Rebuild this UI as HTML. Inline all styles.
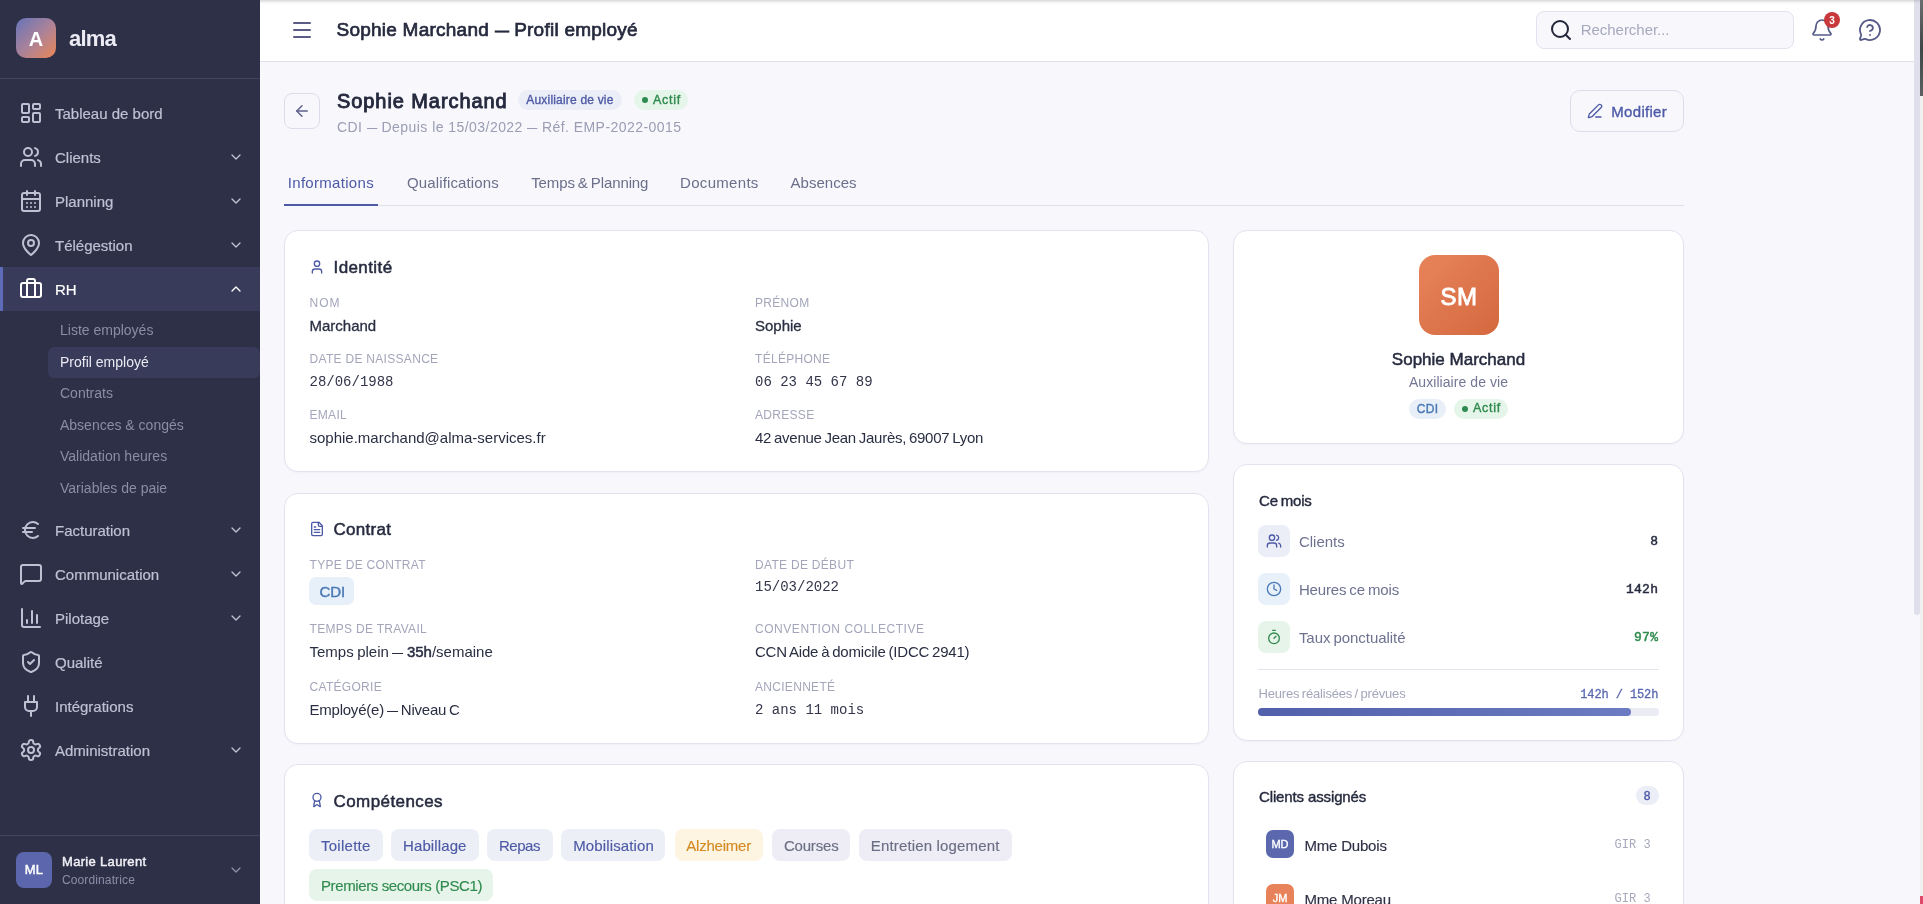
<!DOCTYPE html>
<html lang="fr">
<head>
<meta charset="utf-8">
<title>Sophie Marchand — Profil employé</title>
<style>
*{box-sizing:border-box;margin:0;padding:0}
html,body{width:1923px;height:904px;overflow:hidden}
body{font-family:"Liberation Sans",sans-serif;background:#f7f7fc;color:#262a3e;position:relative}
.a{position:absolute;display:block}
.t{position:absolute;white-space:nowrap}
.d{display:inline-block;overflow:visible}
.d>span{display:inline-block;transform:scaleX(0.74);transform-origin:0 50%}
</style>
</head>
<body>
<div id="root" style="position:absolute;left:0;top:0;width:1923px;height:904px;overflow:hidden;will-change:transform">
<div class="a" style="left:0px;top:0px;width:260px;height:904px;background:#2e3048"></div>
<div class="a" style="left:16px;top:18px;width:40px;height:40px;border-radius:10px;background:linear-gradient(135deg,#6673b8 0%,#a9829a 50%,#ec8656 100%)"></div>
<div class="t" style="left:16.0px;width:40px;text-align:center;top:29.07px;font-size:20px;line-height:20px;color:#ffffff;font-weight:bold;">A</div>
<div class="t" style="left:69px;top:28.38px;font-size:22px;line-height:22px;color:#ecebf4;font-weight:bold;letter-spacing:-0.8px;">alma</div>
<div class="a" style="left:0px;top:78px;width:260px;height:1px;background:#42455d"></div>
<svg class="a" style="left:19px;top:101px;width:24px;height:24px;" viewBox="0 0 24 24" fill="none" stroke="#bfc1d3" stroke-width="2" stroke-linecap="round" stroke-linejoin="round"><rect x="3" y="3" width="7" height="9" rx="1"/><rect x="14" y="3" width="7" height="5" rx="1"/><rect x="14" y="12" width="7" height="9" rx="1"/><rect x="3" y="16" width="7" height="5" rx="1"/></svg>
<div class="t" style="left:55px;top:106.30px;font-size:15px;line-height:15px;color:#bfc1d3;-webkit-text-stroke:0.2px #bfc1d3;">Tableau de bord</div>
<svg class="a" style="left:19px;top:145px;width:24px;height:24px;" viewBox="0 0 24 24" fill="none" stroke="#bfc1d3" stroke-width="2" stroke-linecap="round" stroke-linejoin="round"><path d="M16 21v-2a4 4 0 0 0-4-4H6a4 4 0 0 0-4 4v2"/><circle cx="9" cy="7" r="4"/><path d="M22 21v-2a4 4 0 0 0-3-3.87"/><path d="M16 3.13a4 4 0 0 1 0 7.75"/></svg>
<div class="t" style="left:55px;top:150.30px;font-size:15px;line-height:15px;color:#bfc1d3;-webkit-text-stroke:0.2px #bfc1d3;">Clients</div>
<svg class="a" style="left:228px;top:149px;width:16px;height:16px;" viewBox="0 0 24 24" fill="none" stroke="#bfc1d3" stroke-width="2" stroke-linecap="round" stroke-linejoin="round"><path d="m6 9 6 6 6-6"/></svg>
<svg class="a" style="left:19px;top:189px;width:24px;height:24px;" viewBox="0 0 24 24" fill="none" stroke="#bfc1d3" stroke-width="2" stroke-linecap="round" stroke-linejoin="round"><rect x="3" y="4" width="18" height="18" rx="2"/><path d="M16 2v4M8 2v4M3 10h18M8 14h.01M12 14h.01M16 14h.01M8 18h.01M12 18h.01M16 18h.01"/></svg>
<div class="t" style="left:55px;top:194.30px;font-size:15px;line-height:15px;color:#bfc1d3;-webkit-text-stroke:0.2px #bfc1d3;">Planning</div>
<svg class="a" style="left:228px;top:193px;width:16px;height:16px;" viewBox="0 0 24 24" fill="none" stroke="#bfc1d3" stroke-width="2" stroke-linecap="round" stroke-linejoin="round"><path d="m6 9 6 6 6-6"/></svg>
<svg class="a" style="left:19px;top:233px;width:24px;height:24px;" viewBox="0 0 24 24" fill="none" stroke="#bfc1d3" stroke-width="2" stroke-linecap="round" stroke-linejoin="round"><path d="M20 10c0 6-8 12-8 12s-8-6-8-12a8 8 0 0 1 16 0Z"/><circle cx="12" cy="10" r="3"/></svg>
<div class="t" style="left:55px;top:238.30px;font-size:15px;line-height:15px;color:#bfc1d3;-webkit-text-stroke:0.2px #bfc1d3;">Télégestion</div>
<svg class="a" style="left:228px;top:237px;width:16px;height:16px;" viewBox="0 0 24 24" fill="none" stroke="#bfc1d3" stroke-width="2" stroke-linecap="round" stroke-linejoin="round"><path d="m6 9 6 6 6-6"/></svg>
<div class="a" style="left:0px;top:267px;width:260px;height:44px;background:#383b5a"></div>
<div class="a" style="left:0px;top:267px;width:3px;height:44px;background:#5d6bb8"></div>
<svg class="a" style="left:19px;top:277px;width:24px;height:24px;" viewBox="0 0 24 24" fill="none" stroke="#ffffff" stroke-width="2" stroke-linecap="round" stroke-linejoin="round"><path d="M16 20V4a2 2 0 0 0-2-2h-4a2 2 0 0 0-2 2v16"/><rect x="2" y="6" width="20" height="14" rx="2"/></svg>
<div class="t" style="left:55px;top:282.30px;font-size:15px;line-height:15px;color:#ffffff;-webkit-text-stroke:0.2px #ffffff;">RH</div>
<svg class="a" style="left:228px;top:281px;width:16px;height:16px;" viewBox="0 0 24 24" fill="none" stroke="#ffffff" stroke-width="2" stroke-linecap="round" stroke-linejoin="round"><path d="m18 15-6-6-6 6"/></svg>
<div class="t" style="left:60px;top:323.35px;font-size:14px;line-height:14px;color:#8a8da6;">Liste employés</div>
<div class="a" style="left:48px;top:346.5px;width:212px;height:31.5px;background:#383b5a;border-radius:6px"></div>
<div class="t" style="left:60px;top:354.85px;font-size:14px;line-height:14px;color:#ebeaf3;">Profil employé</div>
<div class="t" style="left:60px;top:386.35px;font-size:14px;line-height:14px;color:#8a8da6;">Contrats</div>
<div class="t" style="left:60px;top:417.85px;font-size:14px;line-height:14px;color:#8a8da6;">Absences &amp; congés</div>
<div class="t" style="left:60px;top:449.35px;font-size:14px;line-height:14px;color:#8a8da6;">Validation heures</div>
<div class="t" style="left:60px;top:480.85px;font-size:14px;line-height:14px;color:#8a8da6;">Variables de paie</div>
<svg class="a" style="left:19px;top:518px;width:24px;height:24px;" viewBox="0 0 24 24" fill="none" stroke="#bfc1d3" stroke-width="2" stroke-linecap="round" stroke-linejoin="round"><path d="M4 10h12M4 14h9M19 6a7.7 7.7 0 0 0-5.2-2A7.9 7.9 0 0 0 6 12c0 4.4 3.5 8 7.8 8 2 0 3.8-.8 5.2-2"/></svg>
<div class="t" style="left:55px;top:523.30px;font-size:15px;line-height:15px;color:#bfc1d3;-webkit-text-stroke:0.2px #bfc1d3;">Facturation</div>
<svg class="a" style="left:228px;top:522px;width:16px;height:16px;" viewBox="0 0 24 24" fill="none" stroke="#bfc1d3" stroke-width="2" stroke-linecap="round" stroke-linejoin="round"><path d="m6 9 6 6 6-6"/></svg>
<svg class="a" style="left:19px;top:562px;width:24px;height:24px;" viewBox="0 0 24 24" fill="none" stroke="#bfc1d3" stroke-width="2" stroke-linecap="round" stroke-linejoin="round"><path d="M22 17a2 2 0 0 1-2 2H6.828a2 2 0 0 0-1.414.586l-2.202 2.202A.71.71 0 0 1 2 21.286V5a2 2 0 0 1 2-2h16a2 2 0 0 1 2 2z"/></svg>
<div class="t" style="left:55px;top:567.30px;font-size:15px;line-height:15px;color:#bfc1d3;-webkit-text-stroke:0.2px #bfc1d3;">Communication</div>
<svg class="a" style="left:228px;top:566px;width:16px;height:16px;" viewBox="0 0 24 24" fill="none" stroke="#bfc1d3" stroke-width="2" stroke-linecap="round" stroke-linejoin="round"><path d="m6 9 6 6 6-6"/></svg>
<svg class="a" style="left:19px;top:606px;width:24px;height:24px;" viewBox="0 0 24 24" fill="none" stroke="#bfc1d3" stroke-width="2" stroke-linecap="round" stroke-linejoin="round"><path d="M3 3v16a2 2 0 0 0 2 2h16"/><path d="M18 17V9M13 17V5M8 17v-3"/></svg>
<div class="t" style="left:55px;top:611.30px;font-size:15px;line-height:15px;color:#bfc1d3;-webkit-text-stroke:0.2px #bfc1d3;">Pilotage</div>
<svg class="a" style="left:228px;top:610px;width:16px;height:16px;" viewBox="0 0 24 24" fill="none" stroke="#bfc1d3" stroke-width="2" stroke-linecap="round" stroke-linejoin="round"><path d="m6 9 6 6 6-6"/></svg>
<svg class="a" style="left:19px;top:650px;width:24px;height:24px;" viewBox="0 0 24 24" fill="none" stroke="#bfc1d3" stroke-width="2" stroke-linecap="round" stroke-linejoin="round"><path d="M20 13c0 5-3.5 7.5-7.66 8.95a1 1 0 0 1-.67-.01C7.5 20.5 4 18 4 13V6a1 1 0 0 1 1-1c2 0 4.5-1.2 6.24-2.72a1.17 1.17 0 0 1 1.52 0C14.51 3.81 17 5 19 5a1 1 0 0 1 1 1z"/><path d="m9 12 2 2 4-4"/></svg>
<div class="t" style="left:55px;top:655.30px;font-size:15px;line-height:15px;color:#bfc1d3;-webkit-text-stroke:0.2px #bfc1d3;">Qualité</div>
<svg class="a" style="left:19px;top:694px;width:24px;height:24px;" viewBox="0 0 24 24" fill="none" stroke="#bfc1d3" stroke-width="2" stroke-linecap="round" stroke-linejoin="round"><path d="M12 22v-5M9 8V2M15 8V2M18 8v5a4 4 0 0 1-4 4h-4a4 4 0 0 1-4-4V8Z"/></svg>
<div class="t" style="left:55px;top:699.30px;font-size:15px;line-height:15px;color:#bfc1d3;-webkit-text-stroke:0.2px #bfc1d3;">Intégrations</div>
<svg class="a" style="left:19px;top:738px;width:24px;height:24px;" viewBox="0 0 24 24" fill="none" stroke="#bfc1d3" stroke-width="2" stroke-linecap="round" stroke-linejoin="round"><path d="M12.22 2h-.44a2 2 0 0 0-2 2v.18a2 2 0 0 1-1 1.73l-.43.25a2 2 0 0 1-2 0l-.15-.08a2 2 0 0 0-2.73.73l-.22.38a2 2 0 0 0 .73 2.73l.15.1a2 2 0 0 1 1 1.72v.51a2 2 0 0 1-1 1.74l-.15.09a2 2 0 0 0-.73 2.73l.22.38a2 2 0 0 0 2.73.73l.15-.08a2 2 0 0 1 2 0l.43.25a2 2 0 0 1 1 1.73V20a2 2 0 0 0 2 2h.44a2 2 0 0 0 2-2v-.18a2 2 0 0 1 1-1.73l.43-.25a2 2 0 0 1 2 0l.15.08a2 2 0 0 0 2.73-.73l.22-.39a2 2 0 0 0-.73-2.73l-.15-.08a2 2 0 0 1-1-1.74v-.5a2 2 0 0 1 1-1.74l.15-.09a2 2 0 0 0 .73-2.73l-.22-.38a2 2 0 0 0-2.73-.73l-.15.08a2 2 0 0 1-2 0l-.43-.25a2 2 0 0 1-1-1.73V4a2 2 0 0 0-2-2z"/><circle cx="12" cy="12" r="3"/></svg>
<div class="t" style="left:55px;top:743.30px;font-size:15px;line-height:15px;color:#bfc1d3;-webkit-text-stroke:0.2px #bfc1d3;">Administration</div>
<svg class="a" style="left:228px;top:742px;width:16px;height:16px;" viewBox="0 0 24 24" fill="none" stroke="#bfc1d3" stroke-width="2" stroke-linecap="round" stroke-linejoin="round"><path d="m6 9 6 6 6-6"/></svg>
<div class="a" style="left:0px;top:835px;width:260px;height:1px;background:#42455d"></div>
<div class="a" style="left:16px;top:852px;width:36px;height:36px;border-radius:8px;background:#5b66ac"></div>
<div class="t" style="left:16.0px;width:36px;text-align:center;top:863.20px;font-size:13px;line-height:13px;color:#ffffff;-webkit-text-stroke:0.45px #ffffff;letter-spacing:0.2px;">ML</div>
<div class="t" style="left:62px;top:855.00px;font-size:13px;line-height:13px;color:#f0eff6;-webkit-text-stroke:0.45px #f0eff6;letter-spacing:0.32px;">Marie Laurent</div>
<div class="t" style="left:62px;top:873.84px;font-size:12px;line-height:12px;color:#8a8ea8;letter-spacing:0.12px;">Coordinatrice</div>
<svg class="a" style="left:228px;top:862px;width:16px;height:16px;" viewBox="0 0 24 24" fill="none" stroke="#8a8ea8" stroke-width="2" stroke-linecap="round" stroke-linejoin="round"><path d="m6 9 6 6 6-6"/></svg>
<div class="a" style="left:260px;top:0px;width:1654px;height:62px;background:#ffffff;border-bottom:1px solid #e1e1ed"></div>
<div class="a" style="left:260px;top:0px;width:1660px;height:5px;background:linear-gradient(rgba(150,152,160,0.38),rgba(200,200,205,0.08) 60%,rgba(255,255,255,0))"></div>
<div class="a" style="left:293px;top:22px;width:18px;height:2px;background:#5a5c85;border-radius:1px"></div>
<div class="a" style="left:293px;top:29px;width:18px;height:2px;background:#5a5c85;border-radius:1px"></div>
<div class="a" style="left:293px;top:36px;width:18px;height:2px;background:#5a5c85;border-radius:1px"></div>
<div class="t" style="left:336.5px;top:20.42px;font-size:19px;line-height:19px;color:#262a3e;-webkit-text-stroke:0.7px #262a3e;letter-spacing:0.24px;">Sophie Marchand <span class="d" style="width:14.06px"><span>—</span></span> Profil employé</div>
<div class="a" style="left:1536px;top:11px;width:258px;height:38px;border-radius:8px;background:#f7f7fc;border:1px solid #e3e2ef"></div>
<svg class="a" style="left:1549px;top:18px;width:24px;height:24px;" viewBox="0 0 24 24" fill="none" stroke="#23263a" stroke-width="2" stroke-linecap="round" stroke-linejoin="round"><circle cx="11" cy="11" r="8"/><path d="m21 21-4.3-4.3"/></svg>
<div class="t" style="left:1580.7px;top:22.30px;font-size:15px;line-height:15px;color:#a6a9bd;letter-spacing:-0.03px;">Rechercher...</div>
<svg class="a" style="left:1810px;top:18px;width:24px;height:24px;" viewBox="0 0 24 24" fill="none" stroke="#565a86" stroke-width="1.7" stroke-linecap="round" stroke-linejoin="round"><path d="M10.268 21a2 2 0 0 0 3.464 0"/><path d="M3.262 15.326A1 1 0 0 0 4 17h16a1 1 0 0 0 .74-1.673C19.41 13.956 18 12.499 18 8A6 6 0 0 0 6 8c0 4.499-1.411 5.956-2.738 7.326"/></svg>
<div class="a" style="left:1824px;top:12px;width:16px;height:16px;border-radius:50%;background:#c8393c"></div>
<div class="t" style="left:1824.0px;width:16px;text-align:center;top:15.54px;font-size:10px;line-height:10px;color:#ffffff;font-weight:bold;">3</div>
<svg class="a" style="left:1858px;top:18px;width:24px;height:24px;" viewBox="0 0 24 24" fill="none" stroke="#565a86" stroke-width="1.8" stroke-linecap="round" stroke-linejoin="round"><path d="M2.992 16.342a2 2 0 0 1 .094 1.167l-1.065 3.29a1 1 0 0 0 1.236 1.168l3.413-.998a2 2 0 0 1 1.099.092 10 10 0 1 0-4.777-4.719"/><path d="M9.09 9a3 3 0 0 1 5.83 1c0 2-3 3-3 3"/><path d="M12 17h.01"/></svg>
<div class="a" style="left:1914px;top:0px;width:6px;height:615px;background:#e0dfec;border-radius:0 0 3px 3px"></div>
<div class="a" style="left:1920px;top:0px;width:3px;height:96px;background:linear-gradient(#6b6e6e,#3f4648 50%,#59605f)"></div>
<div class="a" style="left:1920px;top:96px;width:3px;height:800px;background:#f1f1f1"></div>
<div class="a" style="left:1920px;top:896px;width:3px;height:8px;background:#e04a6a"></div>
<div class="a" style="left:1914px;top:0px;width:6px;height:5px;background:linear-gradient(rgba(150,152,160,0.38),rgba(200,200,205,0.08) 60%,rgba(255,255,255,0))"></div>
<div class="a" style="left:284px;top:93px;width:36px;height:36px;border-radius:8px;border:1px solid #dcdcea"></div>
<svg class="a" style="left:293px;top:102px;width:18px;height:18px;" viewBox="0 0 24 24" fill="none" stroke="#5b5f8a" stroke-width="1.9" stroke-linecap="round" stroke-linejoin="round"><path d="m12 19-7-7 7-7"/><path d="M19 12H5"/></svg>
<div class="t" style="left:337px;top:90.77px;font-size:20px;line-height:20px;color:#262a3e;-webkit-text-stroke:0.9px #262a3e;letter-spacing:0.92px;">Sophie Marchand</div>
<div class="a" style="left:518px;top:90px;width:104px;height:20px;border-radius:10px;background:#eceef7"></div>
<div class="t" style="left:526.3px;top:93.94px;font-size:12px;line-height:12px;color:#4d5aa6;-webkit-text-stroke:0.35px #4d5aa6;letter-spacing:0.19px;">Auxiliaire de vie</div>
<div class="a" style="left:634px;top:90px;width:54px;height:20px;border-radius:10px;background:#e6f5e9"></div>
<div class="a" style="left:642px;top:97px;width:6px;height:6px;border-radius:50%;background:#2e8a4e"></div>
<div class="t" style="left:653px;top:93.52px;font-size:12.5px;line-height:12.5px;color:#2e8a4e;-webkit-text-stroke:0.4px #2e8a4e;letter-spacing:0.75px;">Actif</div>
<div class="t" style="left:337px;top:120.05px;font-size:14px;line-height:14px;color:#9a9db3;letter-spacing:0.45px;">CDI <span class="d" style="width:10.36px"><span>—</span></span> Depuis le 15/03/2022 <span class="d" style="width:10.36px"><span>—</span></span> Réf. EMP-2022-0015</div>
<div class="a" style="left:1570px;top:90px;width:114px;height:42px;border-radius:10px;border:1px solid #dedcec"></div>
<svg class="a" style="left:1587px;top:103px;width:16px;height:16px;" viewBox="0 0 24 24" fill="none" stroke="#4d5aa6" stroke-width="2" stroke-linecap="round" stroke-linejoin="round"><path d="M13 21h8"/><path d="M21.174 6.812a1 1 0 0 0-3.986-3.987L3.842 16.174a2 2 0 0 0-.5.83l-1.321 4.352a.5.5 0 0 0 .623.622l4.353-1.32a2 2 0 0 0 .83-.497z"/></svg>
<div class="t" style="left:1611.3px;top:104.30px;font-size:15px;line-height:15px;color:#4d5aa6;-webkit-text-stroke:0.35px #4d5aa6;letter-spacing:0.3px;">Modifier</div>
<div class="a" style="left:284px;top:205px;width:1400px;height:1px;background:#dfe0ec"></div>
<div class="a" style="left:284px;top:204px;width:94px;height:2px;background:#4d5aa6"></div>
<div class="t" style="left:287.8px;top:175.10px;font-size:15px;line-height:15px;color:#4d5aa6;letter-spacing:0.3px;">Informations</div>
<div class="t" style="left:407px;top:175.10px;font-size:15px;line-height:15px;color:#6b6f8a;letter-spacing:0.13px;">Qualifications</div>
<div class="t" style="left:531.2px;top:175.10px;font-size:15px;line-height:15px;color:#6b6f8a;letter-spacing:-0.11px;word-spacing:-1px;">Temps &amp; Planning</div>
<div class="t" style="left:680.1px;top:175.10px;font-size:15px;line-height:15px;color:#6b6f8a;letter-spacing:0.3px;">Documents</div>
<div class="t" style="left:790.6px;top:175.10px;font-size:15px;line-height:15px;color:#6b6f8a;">Absences</div>
<div class="a" style="left:284px;top:230px;width:925px;height:242px;background:#ffffff;border:1px solid #e3e2ef;border-radius:14px;box-shadow:0 1px 2px rgba(40,40,90,0.04)"></div>
<svg class="a" style="left:309px;top:259px;width:16px;height:16px;" viewBox="0 0 24 24" fill="none" stroke="#4d5aa6" stroke-width="2" stroke-linecap="round" stroke-linejoin="round"><path d="M19 21v-2a4 4 0 0 0-4-4H9a4 4 0 0 0-4 4v2"/><circle cx="12" cy="7" r="4"/></svg>
<div class="t" style="left:333.5px;top:258.61px;font-size:17px;line-height:17px;color:#262a3e;-webkit-text-stroke:0.5px #262a3e;letter-spacing:0.41px;">Identité</div>
<div class="t" style="left:309.5px;top:296.84px;font-size:12px;line-height:12px;color:#a3a6ba;letter-spacing:1.0px;">NOM</div>
<div class="t" style="left:309.5px;top:317.70px;font-size:15px;line-height:15px;color:#2a2e42;-webkit-text-stroke:0.3px #2a2e42;">Marchand</div>
<div class="t" style="left:309.5px;top:353.04px;font-size:12px;line-height:12px;color:#a3a6ba;letter-spacing:0.3px;">DATE DE NAISSANCE</div>
<div class="t" style="left:309.5px;top:374.67px;font-size:14px;line-height:14px;color:#33364a;font-family:'Liberation Mono',monospace;">28/06/1988</div>
<div class="t" style="left:309.5px;top:408.84px;font-size:12px;line-height:12px;color:#a3a6ba;letter-spacing:0.3px;">EMAIL</div>
<div class="t" style="left:309.5px;top:430.30px;font-size:15px;line-height:15px;color:#2a2e42;">sophie.marchand@alma-services.fr</div>
<div class="t" style="left:755px;top:296.84px;font-size:12px;line-height:12px;color:#a3a6ba;letter-spacing:0.3px;">PRÉNOM</div>
<div class="t" style="left:755px;top:317.70px;font-size:15px;line-height:15px;color:#2a2e42;-webkit-text-stroke:0.3px #2a2e42;">Sophie</div>
<div class="t" style="left:755px;top:353.04px;font-size:12px;line-height:12px;color:#a3a6ba;letter-spacing:0.3px;">TÉLÉPHONE</div>
<div class="t" style="left:755px;top:374.67px;font-size:14px;line-height:14px;color:#33364a;font-family:'Liberation Mono',monospace;">06 23 45 67 89</div>
<div class="t" style="left:755px;top:408.84px;font-size:12px;line-height:12px;color:#a3a6ba;letter-spacing:0.3px;">ADRESSE</div>
<div class="t" style="left:755px;top:430.30px;font-size:15px;line-height:15px;color:#2a2e42;letter-spacing:-0.275px;word-spacing:-1px;">42 avenue Jean Jaurès, 69007 Lyon</div>
<div class="a" style="left:284px;top:493px;width:925px;height:251px;background:#ffffff;border:1px solid #e3e2ef;border-radius:14px;box-shadow:0 1px 2px rgba(40,40,90,0.04)"></div>
<svg class="a" style="left:309px;top:521px;width:16px;height:16px;" viewBox="0 0 24 24" fill="none" stroke="#4d5aa6" stroke-width="2" stroke-linecap="round" stroke-linejoin="round"><path d="M15 2H6a2 2 0 0 0-2 2v16a2 2 0 0 0 2 2h12a2 2 0 0 0 2-2V7Z"/><path d="M14 2v4a2 2 0 0 0 2 2h4"/><path d="M10 9H8M16 13H8M16 17H8"/></svg>
<div class="t" style="left:333.5px;top:521.01px;font-size:17px;line-height:17px;color:#262a3e;-webkit-text-stroke:0.5px #262a3e;letter-spacing:0.3px;">Contrat</div>
<div class="t" style="left:309.5px;top:558.94px;font-size:12px;line-height:12px;color:#a3a6ba;letter-spacing:0.3px;">TYPE DE CONTRAT</div>
<div class="a" style="left:309px;top:577px;width:45px;height:27.5px;border-radius:7px;background:#e7eff9"></div>
<div class="t" style="left:319.4px;top:584.30px;font-size:15px;line-height:15px;color:#4a79b5;-webkit-text-stroke:0.45px #4a79b5;">CDI</div>
<div class="t" style="left:309.5px;top:623.04px;font-size:12px;line-height:12px;color:#a3a6ba;letter-spacing:0.3px;">TEMPS DE TRAVAIL</div>
<div class="t" style="left:309.5px;top:643.90px;font-size:15px;line-height:15px;color:#2a2e42;word-spacing:-0.7px;letter-spacing:0px">Temps plein <span class="d" style="width:11.1px"><span>—</span></span> <b style="font-weight:normal;-webkit-text-stroke:0.5px #2a2e42">35h</b>/semaine</div>
<div class="t" style="left:309.5px;top:681.14px;font-size:12px;line-height:12px;color:#a3a6ba;letter-spacing:0.3px;">CATÉGORIE</div>
<div class="t" style="left:309.5px;top:702.30px;font-size:15px;line-height:15px;color:#2a2e42;letter-spacing:-0.23px;word-spacing:-1px;">Employé(e) <span class="d" style="width:11.10px"><span>—</span></span> Niveau C</div>
<div class="t" style="left:755px;top:558.94px;font-size:12px;line-height:12px;color:#a3a6ba;letter-spacing:0.3px;">DATE DE DÉBUT</div>
<div class="t" style="left:755px;top:580.47px;font-size:14px;line-height:14px;color:#33364a;font-family:'Liberation Mono',monospace;">15/03/2022</div>
<div class="t" style="left:755px;top:623.04px;font-size:12px;line-height:12px;color:#a3a6ba;letter-spacing:0.55px;">CONVENTION COLLECTIVE</div>
<div class="t" style="left:755px;top:643.90px;font-size:15px;line-height:15px;color:#2a2e42;letter-spacing:-0.21px;word-spacing:-1px;">CCN Aide à domicile (IDCC 2941)</div>
<div class="t" style="left:755px;top:681.14px;font-size:12px;line-height:12px;color:#a3a6ba;letter-spacing:0.3px;">ANCIENNETÉ</div>
<div class="t" style="left:755px;top:702.77px;font-size:14px;line-height:14px;color:#33364a;font-family:'Liberation Mono',monospace;">2 ans 11 mois</div>
<div class="a" style="left:284px;top:764px;width:925px;height:200px;background:#ffffff;border:1px solid #e3e2ef;border-radius:14px;box-shadow:0 1px 2px rgba(40,40,90,0.04)"></div>
<svg class="a" style="left:309px;top:792px;width:16px;height:16px;" viewBox="0 0 24 24" fill="none" stroke="#4d5aa6" stroke-width="2" stroke-linecap="round" stroke-linejoin="round"><path d="m15.477 12.89 1.515 8.526a.5.5 0 0 1-.81.47l-3.58-2.687a1 1 0 0 0-1.197 0l-3.586 2.686a.5.5 0 0 1-.81-.469l1.514-8.526"/><circle cx="12" cy="8" r="6"/></svg>
<div class="t" style="left:333.5px;top:792.61px;font-size:17px;line-height:17px;color:#262a3e;-webkit-text-stroke:0.5px #262a3e;letter-spacing:0.42px;">Compétences</div>
<div class="a" style="left:309.2px;top:829px;width:73.60000000000002px;height:32px;border-radius:8px;background:#edeff7"></div>
<div class="t" style="left:321.0px;top:838.30px;font-size:15px;line-height:15px;color:#4d5aa6;-webkit-text-stroke:0.15px #4d5aa6;letter-spacing:0.26px;">Toilette</div>
<div class="a" style="left:391.2px;top:829px;width:87.5px;height:32px;border-radius:8px;background:#edeff7"></div>
<div class="t" style="left:403.0px;top:838.30px;font-size:15px;line-height:15px;color:#4d5aa6;-webkit-text-stroke:0.15px #4d5aa6;letter-spacing:0.11px;">Habillage</div>
<div class="a" style="left:487.1px;top:829px;width:65.60000000000002px;height:32px;border-radius:8px;background:#edeff7"></div>
<div class="t" style="left:498.90000000000003px;top:838.30px;font-size:15px;line-height:15px;color:#4d5aa6;-webkit-text-stroke:0.15px #4d5aa6;letter-spacing:-0.45px;">Repas</div>
<div class="a" style="left:561.4px;top:829px;width:104.0px;height:32px;border-radius:8px;background:#edeff7"></div>
<div class="t" style="left:573.1999999999999px;top:838.30px;font-size:15px;line-height:15px;color:#4d5aa6;-webkit-text-stroke:0.15px #4d5aa6;letter-spacing:0.13px;">Mobilisation</div>
<div class="a" style="left:674.5px;top:829px;width:88.89999999999998px;height:32px;border-radius:8px;background:#fdf4e2"></div>
<div class="t" style="left:686.3px;top:838.30px;font-size:15px;line-height:15px;color:#d48a22;-webkit-text-stroke:0.15px #d48a22;letter-spacing:-0.22px;">Alzheimer</div>
<div class="a" style="left:772.1px;top:829px;width:78.29999999999995px;height:32px;border-radius:8px;background:#eeedf5"></div>
<div class="t" style="left:783.9px;top:838.30px;font-size:15px;line-height:15px;color:#6b6e85;-webkit-text-stroke:0.15px #6b6e85;letter-spacing:-0.18px;">Courses</div>
<div class="a" style="left:859px;top:829px;width:153px;height:32px;border-radius:8px;background:#eeedf5"></div>
<div class="t" style="left:870.8px;top:838.30px;font-size:15px;line-height:15px;color:#6b6e85;-webkit-text-stroke:0.15px #6b6e85;letter-spacing:0.16px;">Entretien logement</div>
<div class="a" style="left:309.2px;top:869px;width:184.3px;height:32px;border-radius:8px;background:#e6f4e9"></div>
<div class="t" style="left:321.0px;top:878.30px;font-size:15px;line-height:15px;color:#2f8a4e;-webkit-text-stroke:0.15px #2f8a4e;letter-spacing:-0.39px;">Premiers secours (PSC1)</div>
<div class="a" style="left:1233px;top:230px;width:451px;height:214px;background:#ffffff;border:1px solid #e3e2ef;border-radius:14px;box-shadow:0 1px 2px rgba(40,40,90,0.04)"></div>
<div class="a" style="left:1419px;top:255px;width:80px;height:80px;border-radius:16px;background:linear-gradient(135deg,#e8845a,#d4683f)"></div>
<div class="t" style="left:1419.0px;width:80px;text-align:center;top:284.68px;font-size:24px;line-height:24px;color:#ffffff;-webkit-text-stroke:0.9px #ffffff;letter-spacing:0.5px;">SM</div>
<div class="t" style="left:1308.5px;width:300px;text-align:center;top:350.81px;font-size:17px;line-height:17px;color:#262a3e;-webkit-text-stroke:0.5px #262a3e;">Sophie Marchand</div>
<div class="t" style="left:1308.5px;width:300px;text-align:center;top:374.65px;font-size:14px;line-height:14px;color:#737794;letter-spacing:0.06px;">Auxiliaire de vie</div>
<div class="a" style="left:1409px;top:399px;width:37px;height:20px;border-radius:10px;background:#e8eff9"></div>
<div class="t" style="left:1409.0px;width:37px;text-align:center;top:402.84px;font-size:12px;line-height:12px;color:#4a79b5;-webkit-text-stroke:0.4px #4a79b5;letter-spacing:0.3px;">CDI</div>
<div class="a" style="left:1454px;top:399px;width:54px;height:20px;border-radius:10px;background:#e6f5e9"></div>
<div class="a" style="left:1462px;top:406px;width:6px;height:6px;border-radius:50%;background:#2e8a4e"></div>
<div class="t" style="left:1473px;top:402.42px;font-size:12.5px;line-height:12.5px;color:#2e8a4e;-webkit-text-stroke:0.4px #2e8a4e;letter-spacing:0.75px;">Actif</div>
<div class="a" style="left:1233px;top:464px;width:451px;height:277px;background:#ffffff;border:1px solid #e3e2ef;border-radius:14px;box-shadow:0 1px 2px rgba(40,40,90,0.04)"></div>
<div class="t" style="left:1259px;top:492.50px;font-size:15px;line-height:15px;color:#262a3e;-webkit-text-stroke:0.4px #262a3e;letter-spacing:-0.2px;word-spacing:-1px;">Ce mois</div>
<div class="a" style="left:1258px;top:525px;width:32px;height:32px;border-radius:8px;background:#eceef7"></div>
<svg class="a" style="left:1266px;top:533px;width:16px;height:16px;" viewBox="0 0 24 24" fill="none" stroke="#4d5aa6" stroke-width="2" stroke-linecap="round" stroke-linejoin="round"><path d="M16 21v-2a4 4 0 0 0-4-4H6a4 4 0 0 0-4 4v2"/><circle cx="9" cy="7" r="4"/><path d="M22 21v-2a4 4 0 0 0-3-3.87"/><path d="M16 3.13a4 4 0 0 1 0 7.75"/></svg>
<div class="t" style="left:1298.9px;top:534.30px;font-size:15px;line-height:15px;color:#6e7290;word-spacing:-1px;">Clients</div>
<div class="t" style="right:264.70000000000005px;top:535.24px;font-size:13px;line-height:13px;color:#262a3e;-webkit-text-stroke:0.45px #262a3e;font-family:'Liberation Mono',monospace;letter-spacing:0.3px;">8</div>
<div class="a" style="left:1258px;top:573px;width:32px;height:32px;border-radius:8px;background:#e8f0fa"></div>
<svg class="a" style="left:1266px;top:581px;width:16px;height:16px;" viewBox="0 0 24 24" fill="none" stroke="#4a7ab8" stroke-width="2" stroke-linecap="round" stroke-linejoin="round"><circle cx="12" cy="12" r="10"/><path d="M12 6v6l4 2"/></svg>
<div class="t" style="left:1298.9px;top:582.30px;font-size:15px;line-height:15px;color:#6e7290;letter-spacing:-0.15px;word-spacing:-1px;">Heures ce mois</div>
<div class="t" style="right:264.70000000000005px;top:583.24px;font-size:13px;line-height:13px;color:#262a3e;-webkit-text-stroke:0.45px #262a3e;font-family:'Liberation Mono',monospace;letter-spacing:0.3px;">142h</div>
<div class="a" style="left:1258px;top:621px;width:32px;height:32px;border-radius:8px;background:#e6f4e9"></div>
<svg class="a" style="left:1266px;top:629px;width:16px;height:16px;" viewBox="0 0 24 24" fill="none" stroke="#2f8a4e" stroke-width="2" stroke-linecap="round" stroke-linejoin="round"><path d="M10 2h4M12 14l3-3"/><circle cx="12" cy="14" r="8"/></svg>
<div class="t" style="left:1298.9px;top:630.30px;font-size:15px;line-height:15px;color:#6e7290;letter-spacing:-0.05px;word-spacing:-1px;">Taux ponctualité</div>
<div class="t" style="right:264.70000000000005px;top:631.24px;font-size:13px;line-height:13px;color:#2f8a4e;-webkit-text-stroke:0.45px #2f8a4e;font-family:'Liberation Mono',monospace;letter-spacing:0.3px;">97%</div>
<div class="a" style="left:1258px;top:669px;width:401px;height:1px;background:#e4e4ef"></div>
<div class="t" style="left:1258.5px;top:687.00px;font-size:13px;line-height:13px;color:#a3a6ba;letter-spacing:-0.18px;word-spacing:-1px;">Heures réalisées / prévues</div>
<div class="t" style="right:264.70000000000005px;top:688.80px;font-size:12px;line-height:12px;color:#5a68b0;-webkit-text-stroke:0.3px #5a68b0;font-family:'Liberation Mono',monospace;letter-spacing:-0.1px;">142h / 152h</div>
<div class="a" style="left:1258px;top:708px;width:401px;height:8px;border-radius:4px;background:#ebebf3"></div>
<div class="a" style="left:1258px;top:708px;width:373px;height:8px;border-radius:4px;background:linear-gradient(90deg,#5060aa,#6b7cc2)"></div>
<div class="a" style="left:1233px;top:761px;width:451px;height:200px;background:#ffffff;border:1px solid #e3e2ef;border-radius:14px;box-shadow:0 1px 2px rgba(40,40,90,0.04)"></div>
<div class="t" style="left:1259px;top:789.30px;font-size:15px;line-height:15px;color:#262a3e;-webkit-text-stroke:0.4px #262a3e;letter-spacing:-0.13px;">Clients assignés</div>
<div class="a" style="left:1635.6px;top:786.2px;width:23.2px;height:19.2px;border-radius:10px;background:#eceef7"></div>
<div class="t" style="left:1635.7px;width:23px;text-align:center;top:790.34px;font-size:12px;line-height:12px;color:#4d5aa6;-webkit-text-stroke:0.4px #4d5aa6;">8</div>
<div class="a" style="left:1266px;top:830px;width:28px;height:28px;border-radius:7px;background:#5b68ae"></div>
<div class="t" style="left:1266.0px;width:28px;text-align:center;top:838.69px;font-size:11px;line-height:11px;color:#ffffff;-webkit-text-stroke:0.35px #ffffff;">MD</div>
<div class="t" style="left:1304.5px;top:837.60px;font-size:15px;line-height:15px;color:#2e3145;-webkit-text-stroke:0.15px #2e3145;letter-spacing:-0.2px;">Mme Dubois</div>
<div class="t" style="right:272.4000000000001px;top:839.40px;font-size:12px;line-height:12px;color:#a6a9bb;font-family:'Liberation Mono',monospace;">GIR 3</div>
<div class="a" style="left:1266px;top:884px;width:28px;height:28px;border-radius:7px;background:#e8825a"></div>
<div class="t" style="left:1266.0px;width:28px;text-align:center;top:892.69px;font-size:11px;line-height:11px;color:#ffffff;-webkit-text-stroke:0.35px #ffffff;">JM</div>
<div class="t" style="left:1304.5px;top:891.60px;font-size:15px;line-height:15px;color:#2e3145;-webkit-text-stroke:0.15px #2e3145;letter-spacing:-0.2px;">Mme Moreau</div>
<div class="t" style="right:272.4000000000001px;top:893.40px;font-size:12px;line-height:12px;color:#a6a9bb;font-family:'Liberation Mono',monospace;">GIR 3</div>
</div>
</body>
</html>
